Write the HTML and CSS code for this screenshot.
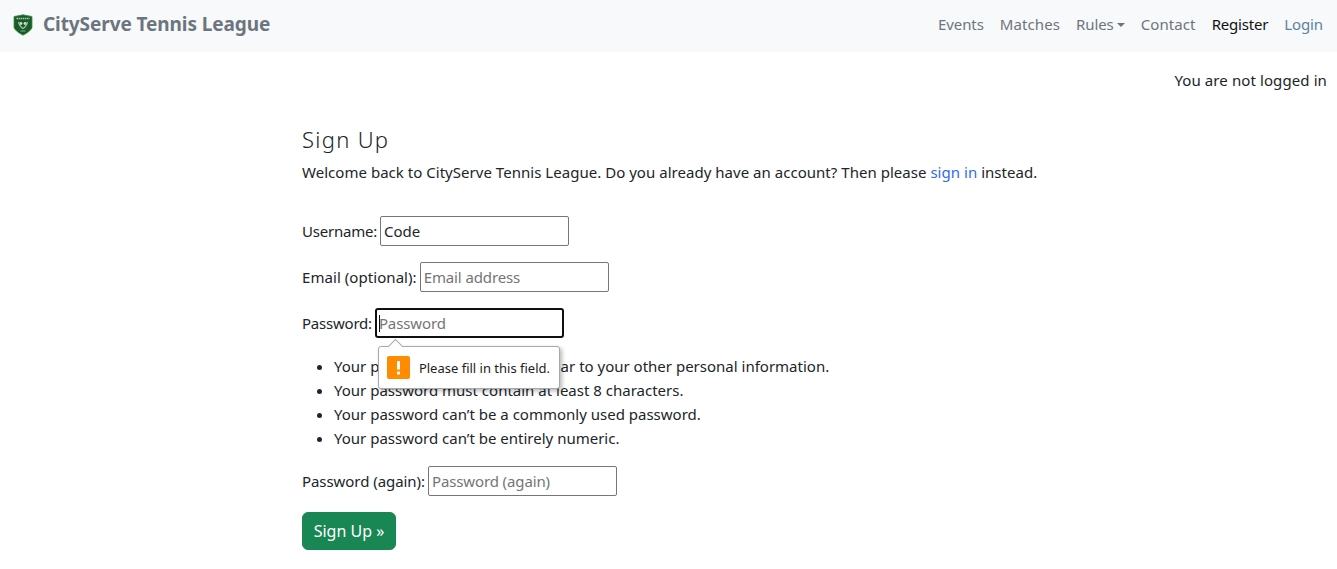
FILE: index.html
```html
<!DOCTYPE html>
<html lang="en">
<head>
<meta charset="utf-8">
<title>Sign Up</title>
<link rel="stylesheet" href="styles.css">
</head>
<body>
<nav class="navbar">
  <a class="brand" href="#">
    <svg class="logo" viewBox="0 0 20 22" width="20" height="22" aria-hidden="true">
      <path d="M1 2.5 L10 .8 L19 2.5 L19 13.5 Q18 17 10 21.2 Q2 17 1 13.5 Z" fill="#1c5a2c" stroke="#3f8f45" stroke-width=".8"/>
      <path d="M3.5 4.5 H16.5" stroke="#a9c9ac" stroke-width="1.4" stroke-dasharray="1.5 .6"/>
      <path d="M5.5 8 Q7 13 10 14.5 Q13 13 14.5 8" fill="none" stroke="#9cc4a0" stroke-width="1.3"/>
      <circle cx="8" cy="9.5" r="1.4" fill="#c6dcc5"/>
      <circle cx="12" cy="9.5" r="1.4" fill="#c6dcc5"/>
      <path d="M7.5 17 H12.5" stroke="#6fa477" stroke-width="1.2"/>
    </svg>
    <span>CityServe Tennis League</span>
  </a>
  <ul class="nav-links">
    <li><a href="#">Events</a></li>
    <li><a href="#" class="wide">Matches</a></li>
    <li><a href="#" class="dropdown">Rules</a></li>
    <li><a href="#" class="wide">Contact</a></li>
    <li><a href="#" class="active">Register</a></li>
    <li><a href="#" class="login">Login</a></li>
  </ul>
</nav>
<p class="status">You are not logged in</p>
<main class="content">
  <h1>Sign Up</h1>
  <p class="intro">Welcome back to CityServe Tennis League. Do you already have an account? Then please <a href="#">sign in</a> instead.</p>
  <form class="signup">
    <p class="row"><label class="tight" for="u">Username:</label> <input id="u" type="text" value="Code"></p>
    <p class="row"><label class="loose" for="e">Email (optional):</label> <input id="e" type="email" placeholder="Email address"></p>
    <p class="row"><label class="tight" for="p">Password:</label> <span class="field">
      <input id="p" class="focused" type="password" placeholder="Password">
      <span class="caret"></span>
      <span class="tooltip">
        <span class="arrow"></span>
        <svg class="warn" viewBox="0 0 23 23" width="23" height="23" aria-hidden="true">
          <rect width="23" height="23" rx="2" fill="#ff8c00"/>
          <rect x="10" y="5" width="3" height="8.5" rx=".6" fill="#fff"/>
          <rect x="10" y="15.5" width="3" height="3" rx=".6" fill="#fff"/>
        </svg>
        <span>Please fill in this field.</span>
      </span>
    </span></p>
    <ul class="rules">
      <li>Your password can’t be too similar to your other personal information.</li>
      <li>Your password must contain at least 8 characters.</li>
      <li>Your password can’t be a commonly used password.</li>
      <li>Your password can’t be entirely numeric.</li>
    </ul>
    <p class="row"><label class="snug" for="a">Password (again):</label> <input id="a" type="password" placeholder="Password (again)"></p>
    <button type="button" class="btn">Sign Up »</button>
  </form>
</main>
</body>
</html>
```
FILE: styles.css
```css
* { box-sizing: border-box; }
html, body { margin: 0; padding: 0; }
body {
  font-family: "Noto Sans", "Open Sans", sans-serif;
  font-size: 15px;
  line-height: 24px;
  color: #212529;
  background: #fff;
  overflow: hidden;
}
a { text-decoration: none; }
.navbar {
  height: 52px;
  background: #f8f9fa;
  display: flex;
  align-items: center;
  justify-content: space-between;
  padding: 0 6px 4px 13px;
}
.brand {
  display: flex;
  align-items: center;
  gap: 10px;
  color: #6c757d;
  font-size: 19px;
  font-weight: 700;
  letter-spacing: -.09px;
}
.logo { display: block; margin-top: 2px; }
.nav-links {
  display: flex;
  list-style: none;
  margin: 0;
  padding: 0;
  letter-spacing: -.1px;
}
.nav-links a {
  display: block;
  padding: 0 8px;
  color: #6c757d;
}
.nav-links a.wide { letter-spacing: .1px; }
.nav-links a.active { color: #111; letter-spacing: -.2px; }
.nav-links a.login { color: #5b82a3; }
.dropdown::after {
  content: "";
  display: inline-block;
  margin-left: 3px;
  vertical-align: 3px;
  border-top: 4px solid;
  border-left: 4px solid transparent;
  border-right: 4px solid transparent;
}
.status {
  margin: 16px 10px 0 0;
  text-align: right;
  letter-spacing: .1px;
}
.content { margin: 0 0 0 302px; }
h1 {
  margin: 33px 0 0;
  font-size: 22px;
  line-height: 28px;
  font-weight: 300;
  letter-spacing: 1.3px;
}
.intro { margin: 7px 0 0; letter-spacing: .03px; }
.intro a { color: #2f6bf2; }
.signup { margin-top: 32px; }
.row { margin: 0 0 16px; line-height: 30px; height: 30px; display: flex; align-items: center; gap: 3px; }
.tight { letter-spacing: -.22px; }
.loose { letter-spacing: .06px; }
.snug { letter-spacing: -.06px; }
.field { position: relative; display: block; }
input {
  display: block;
  width: 189px;
  height: 30px;
  padding: 1px 3px;
  border: 1px solid #767676;
  border-radius: 2px;
  background: #fff;
  font: inherit;
  color: #212529;
}
input::placeholder { color: #757575; opacity: 1; letter-spacing: -.12px; }
input.focused { border: 2px solid #101010; border-radius: 3px; padding: 1px 2px; }
.caret {
  position: absolute;
  left: 4px;
  top: 7px;
  width: 1px;
  height: 17px;
  background: #111;
}
.tooltip {
  position: absolute;
  left: 3px;
  top: 38px;
  width: 182px;
  height: 43px;
  display: flex;
  align-items: center;
  gap: 9px;
  padding: 0 8px;
  background: #fff;
  border: 1px solid #a8a8a8;
  border-radius: 3px;
  box-shadow: 2px 2px 4px rgba(0,0,0,.28);
  font-size: 13px;
  line-height: 18px;
  color: #222;
  white-space: nowrap;
}
.arrow {
  position: absolute;
  left: 11px;
  top: -6px;
  width: 11px;
  height: 11px;
  background: #fff;
  border-left: 1px solid #a8a8a8;
  border-top: 1px solid #a8a8a8;
  transform: rotate(45deg);
}
.warn { flex: none; }
.rules { margin: 0 0 16px; padding: 0 0 0 32px; }
.btn {
  display: block;
  width: 94px;
  height: 38px;
  padding: 0;
  border: 1px solid #198754;
  border-radius: 6px;
  background: #198754;
  color: #fff;
  font: inherit;
  font-size: 16px;
}
```
